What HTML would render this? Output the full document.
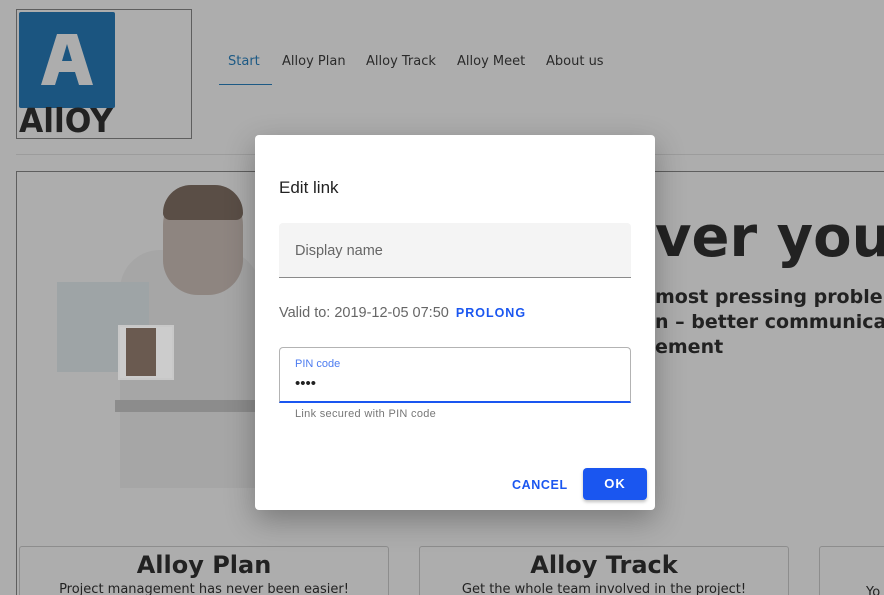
<!DOCTYPE html>
<html><head><meta charset="utf-8"><style>
*{margin:0;padding:0;box-sizing:border-box}
html,body{width:884px;height:595px;overflow:hidden}
body{background:#adadad;font-family:"DejaVu Sans","Liberation Sans",sans-serif;position:relative;color:#222}
.abs{position:absolute}
.nav{top:54px;font-size:13px;color:#2a2a2a}
</style></head><body>
<div class="abs" style="left:16px;top:9px;width:176px;height:130px;border:1px solid #5e5e5e"></div>
<div class="abs" style="left:19px;top:12px;width:96px;height:96px;background:#1b5580;border-radius:2px"></div>
<svg class="abs" style="left:19px;top:12px" width="96" height="96"><path d="M22 73 L38 22 L58 22 L74 73 L60 73 L56 60 L40 60 L36 73 Z M43 49 L53 49 L48 32 Z" fill="#adadad" fill-rule="evenodd"/></svg>
<div class="abs" style="left:19px;top:103px;font:bold 33px/36px 'DejaVu Sans',sans-serif;color:#222;transform:scaleX(0.95);transform-origin:left">AllOY</div>
<div class="abs nav" style="left:228px;color:#1d5a85">Start</div>
<div class="abs" style="left:219px;top:84px;width:53px;height:1px;background:#1d5a85"></div>
<div class="abs nav" style="left:282px">Alloy Plan</div>
<div class="abs nav" style="left:366px">Alloy Track</div>
<div class="abs nav" style="left:457px">Alloy Meet</div>
<div class="abs nav" style="left:546px">About us</div>
<div class="abs" style="left:16px;top:154px;width:868px;height:1px;background:#9c9c9c"></div>
<div class="abs" style="left:16px;top:171px;width:880px;height:440px;border:1px solid #5e5e5e"></div>
<!-- photo approx -->
<div class="abs" style="left:120px;top:250px;width:140px;height:238px;background:#a6a6a6;border-radius:40px 40px 0 0"></div>
<div class="abs" style="left:163px;top:185px;width:80px;height:110px;background:#8e8580;border-radius:40px 40px 35px 35px"></div>
<div class="abs" style="left:163px;top:185px;width:80px;height:35px;background:#5a4e46;border-radius:40px 40px 10px 10px"></div>
<div class="abs" style="left:57px;top:282px;width:92px;height:90px;background:#9ea4a6"></div>
<div class="abs" style="left:118px;top:325px;width:56px;height:55px;background:#ccc;border:2px solid #c8c8c8"></div>
<div class="abs" style="left:126px;top:328px;width:30px;height:48px;background:#6a5a50"></div>
<div class="abs" style="left:115px;top:400px;width:140px;height:12px;background:#8c8c8c"></div>
<div class="abs" style="left:655px;top:205px;font:bold 56px 'DejaVu Sans',sans-serif;color:#222;white-space:nowrap">ver you</div>
<div class="abs" style="left:655px;top:285px;font:bold 19px/25px 'DejaVu Sans',sans-serif;color:#222;white-space:nowrap">most pressing probler<br>n – better communica<br>ement</div>
<div class="abs" style="left:19px;top:546px;width:370px;height:60px;border:1px solid #8d8d8d;border-radius:3px;text-align:center"><div style="font:bold 24px 'DejaVu Sans',sans-serif;margin-top:4px">Alloy Plan</div><div style="font-size:13px;margin-top:3px">Project management has never been easier!</div></div>
<div class="abs" style="left:419px;top:546px;width:370px;height:60px;border:1px solid #8d8d8d;border-radius:3px;text-align:center"><div style="font:bold 24px 'DejaVu Sans',sans-serif;margin-top:4px">Alloy Track</div><div style="font-size:13px;margin-top:3px">Get the whole team involved in the project!</div></div>
<div class="abs" style="left:819px;top:546px;width:100px;height:60px;border:1px solid #8d8d8d;border-radius:3px"><div style="font-size:13px;margin:38px 0 0 46px">Yo</div></div>
<!-- dialog -->
<div class="abs" style="left:255px;top:135px;width:400px;height:375px;background:#fff;border-radius:4px;box-shadow:0 10px 30px rgba(0,0,0,.3);font-family:'Liberation Sans',sans-serif">
<div class="abs" style="left:24px;top:43px;font-size:17px;color:#222">Edit link</div>
<div class="abs" style="left:24px;top:88px;width:352px;height:55px;background:#f4f4f4;border-bottom:1px solid #8a8a8a;border-radius:4px 4px 0 0"><div style="margin:20px 0 0 16px;font-size:14.5px;color:#666">Display name</div></div>
<div class="abs" style="left:24px;top:170px;font-size:14.5px;color:#666;white-space:nowrap">Valid to: 2019-12-05 07:50 <span style="color:#1a56f0;font-weight:bold;letter-spacing:1px;margin-left:3px;font-size:12.5px">PROLONG</span></div>
<div class="abs" style="left:24px;top:212px;width:352px;height:56px;border:1px solid #b3b3b3;border-bottom:2px solid #1a56f0;border-radius:4px 4px 0 0">
<div style="margin:10px 0 0 15px;font-size:11px;color:#4d7cf0">PIN code</div>
<div style="margin:5px 0 0 15px;font-size:15px;color:#222;letter-spacing:0px">••••</div></div>
<div class="abs" style="left:40px;top:273px;font-size:11px;color:#777;letter-spacing:.3px">Link secured with PIN code</div>
<div class="abs" style="left:257px;top:343px;font-size:12.5px;color:#1a56f0;font-weight:bold;letter-spacing:0.6px">CANCEL</div>
<div class="abs" style="left:328px;top:333px;width:64px;height:32px;background:#1a56f0;border-radius:4px;box-shadow:0 2px 3px rgba(0,0,0,.25);color:#fff;font-weight:bold;font-size:13px;text-align:center;line-height:32px;letter-spacing:1px">OK</div>
</div>
</body></html>
